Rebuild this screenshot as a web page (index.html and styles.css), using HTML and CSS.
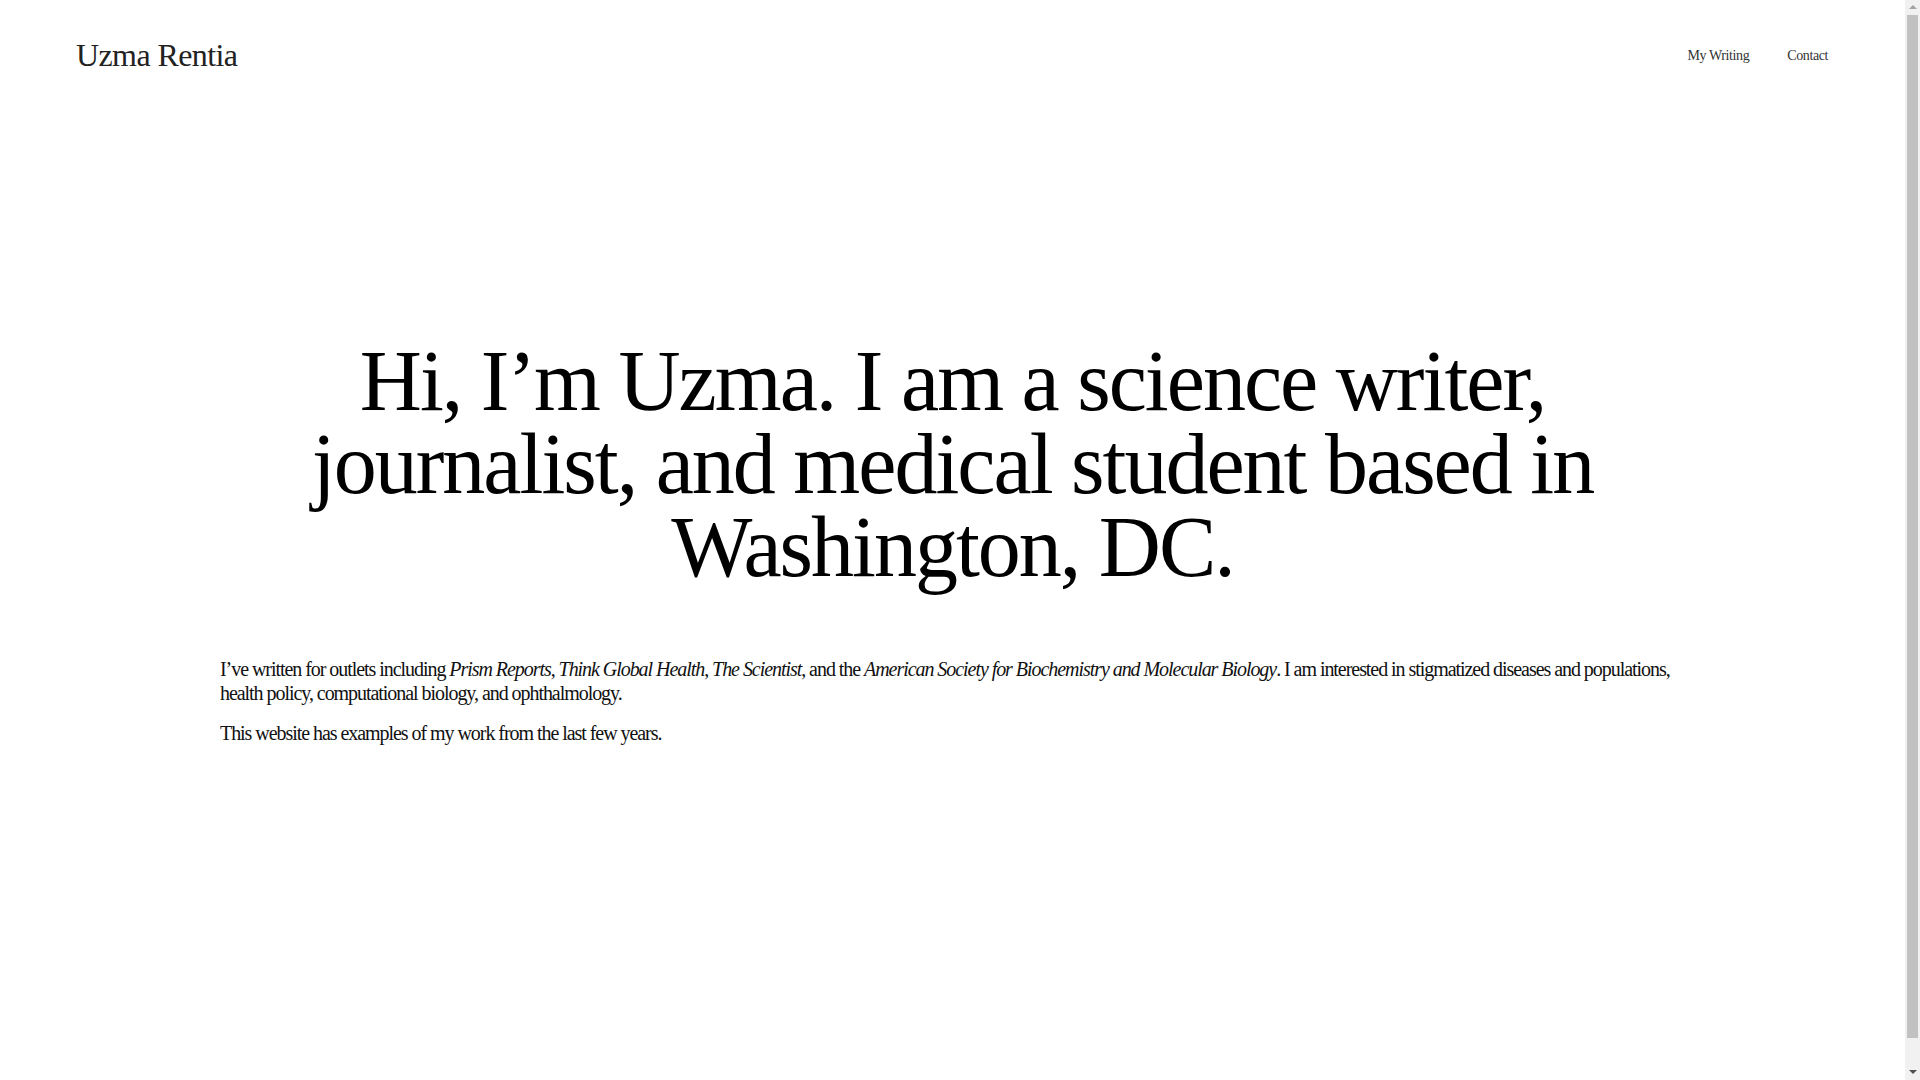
FILE: index.html
```html
<!DOCTYPE html>
<html lang="en">
<head>
<meta charset="utf-8">
<title>Uzma Rentia</title>
<link rel="stylesheet" href="styles.css">
</head>
<body>
<div class="page">
  <header class="site-header">
    <a class="site-title" href="#">Uzma Rentia</a>
    <nav class="site-nav">
      <a href="#">My Writing</a>
      <a href="#">Contact</a>
    </nav>
  </header>
  <main class="content">
    <h1 class="intro-heading">Hi, I’m Uzma. I am a science writer, journalist, and medical student based in Washington, DC.</h1>
    <div class="intro-text">
      <p>I’ve written for outlets including <em>Prism Reports</em>, <em>Think Global Health</em>, <em>The Scientist</em>, and the <em>American Society for Biochemistry and Molecular Biology</em>. I am interested in stigmatized diseases and populations, health policy, computational biology, and ophthalmology.</p>
      <p>This website has examples of my work from the last few years.</p>
    </div>
  </main>
</div>
<div class="scrollbar" aria-hidden="true">
  <span class="scroll-arrow scroll-up"></span>
  <span class="scroll-thumb"></span>
  <span class="scroll-arrow scroll-down"></span>
</div>
</body>
</html>
```

FILE: styles.css
```css
html, body {
  margin: 0;
  padding: 0;
  background: #ffffff;
}

body {
  font-family: "Liberation Serif", "Times New Roman", serif;
  color: #000000;
}

.page {
  margin-right: 15px;
}

a {
  color: inherit;
  text-decoration: none;
}

.site-header {
  display: flex;
  justify-content: space-between;
  align-items: center;
  padding: 34px 77px 0 76px;
  height: 42px;
}

.site-title {
  font-size: 32px;
  color: #222222;
  letter-spacing: -0.6px;
}

.site-nav {
  display: flex;
  gap: 38px;
  font-size: 14px;
  color: #333333;
  letter-spacing: -0.4px;
  padding-top: 2px;
}

.content {
  padding: 264px 220px 0 220px;
}

.intro-heading {
  margin: 0;
  text-align: center;
  font-weight: normal;
  font-size: 86px;
  line-height: 83px;
  letter-spacing: -2px;
  color: #000000;
}

.intro-text {
  margin-top: 68px;
  font-size: 20px;
  line-height: 24px;
  letter-spacing: -1.05px;
  color: #111111;
}

.intro-text p {
  margin: 0 0 16px 0;
}

/* imitation of the browser's vertical scrollbar shown in the screenshot */
.scrollbar {
  position: fixed;
  top: 0;
  right: 0;
  bottom: 0;
  width: 15px;
  background: #f1f1f1;
  display: flex;
  flex-direction: column;
  align-items: center;
}

.scroll-arrow {
  width: 0;
  height: 0;
  box-sizing: border-box;
}

.scroll-up {
  border-left: 4px solid transparent;
  border-right: 4px solid transparent;
  border-bottom: 4px solid #a3a3a3;
  margin-top: 5px;
  margin-bottom: 6px;
}

.scroll-thumb {
  flex: 1;
  width: 11px;
  background: #c1c1c1;
  margin-bottom: 32px;
}

.scroll-down {
  border-left: 4px solid transparent;
  border-right: 4px solid transparent;
  border-top: 4px solid #505050;
  margin-bottom: 6px;
}
```
